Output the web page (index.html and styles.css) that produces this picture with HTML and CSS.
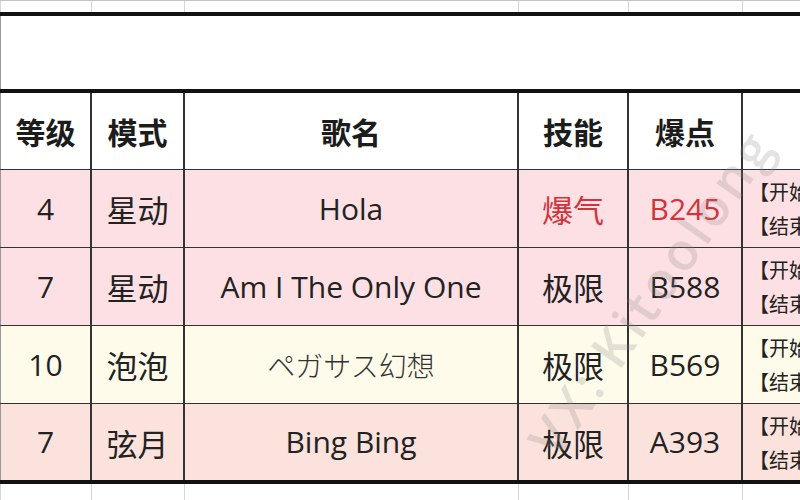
FILE: index.html
```html
<!DOCTYPE html>
<html lang="zh">
<head>
<meta charset="utf-8">
<link rel="stylesheet" href="styles.css">
</head>
<body>
<div class="sheet">
  <div class="row gridline">
    <div class="cell"></div><div class="cell"></div><div class="cell"></div><div class="cell"></div><div class="cell"></div><div class="cell"></div>
  </div>
  <div class="thick"></div>
  <div class="title"></div>
  <div class="thick"></div>
  <div class="row head">
    <div class="cell">等级</div>
    <div class="cell">模式</div>
    <div class="cell">歌名</div>
    <div class="cell">技能</div>
    <div class="cell">爆点</div>
    <div class="cell"></div>
  </div>
  <div class="row data pink">
    <div class="cell">4</div>
    <div class="cell cn">星动</div>
    <div class="cell">Hola</div>
    <div class="cell cn red">爆气</div>
    <div class="cell red">B245</div>
    <div class="cell note"><span>【开始】</span><span>【结束】</span></div>
  </div>
  <div class="row data pink">
    <div class="cell">7</div>
    <div class="cell cn">星动</div>
    <div class="cell">Am I The Only One</div>
    <div class="cell cn">极限</div>
    <div class="cell">B588</div>
    <div class="cell note"><span>【开始】</span><span>【结束】</span></div>
  </div>
  <div class="row data cream">
    <div class="cell">10</div>
    <div class="cell cn">泡泡</div>
    <div class="cell jp">ペガサス幻想</div>
    <div class="cell cn">极限</div>
    <div class="cell">B569</div>
    <div class="cell note"><span>【开始】</span><span>【结束】</span></div>
  </div>
  <div class="row data peach last">
    <div class="cell">7</div>
    <div class="cell cn">弦月</div>
    <div class="cell">Bing Bing</div>
    <div class="cell cn">极限</div>
    <div class="cell">A393</div>
    <div class="cell note"><span>【开始】</span><span>【结束】</span></div>
  </div>
  <div class="thick"></div>
  <div class="row gridline bottom">
    <div class="cell"></div><div class="cell"></div><div class="cell"></div><div class="cell"></div><div class="cell"></div><div class="cell"></div>
  </div>
</div>
<div class="watermark">VX: Kitoolong</div>
</body>
</html>
```
FILE: styles.css
```css
html, body {
  margin: 0;
  padding: 0;
  width: 800px;
  height: 500px;
  overflow: hidden;
  background: #ffffff;
}

body {
  position: relative;
  font-family: "Open Sans", "Noto Sans CJK SC", sans-serif;
  color: #222222;
}

.sheet {
  width: 950px;
  display: flex;
  flex-direction: column;
}

.row {
  display: grid;
  grid-template-columns: 92px 93px 334px 110px 114px 207px;
}

.cell {
  box-sizing: border-box;
  border-right: 2px solid #333333;
  display: flex;
  align-items: center;
  justify-content: center;
  font-size: 30px;
  line-height: 1;
  white-space: nowrap;
}

.row .cell:first-child {
  border-left: 1px solid #9a9a9a;
}

.gridline {
  height: 12px;
  box-sizing: border-box;
  border-top: 1px solid #c4c4c4;
}

.gridline .cell {
  border-right: 1px solid #d6d6d6;
}

.gridline .cell:first-child {
  border-left: 1px solid #d6d6d6;
}

.gridline.bottom {
  height: 20px;
  border-top: none;
}

.thick {
  height: 4px;
  background: #121212;
}

.title {
  height: 73px;
  box-sizing: border-box;
  border-left: 1px solid #9a9a9a;
  background: #ffffff;
}

.head {
  height: 77px;
  box-sizing: border-box;
  border-bottom: 1px solid #333333;
  background: #ffffff;
}

.head .cell {
  font-family: "Noto Sans CJK SC", sans-serif;
  font-weight: 700;
  font-size: 30px;
  color: #1c1c1c;
}

.data {
  height: 78px;
  box-sizing: border-box;
  border-bottom: 1px solid #333333;
}

.data.last {
  height: 76px;
  border-bottom: none;
}

.data .cell {
  font-family: "Open Sans", "Noto Sans CJK SC", sans-serif;
}

.data .cell.cn {
  font-family: "Noto Sans CJK SC", sans-serif;
  font-size: 31px;
}

.data .cell.jp {
  font-family: "Noto Sans CJK JP", sans-serif;
  font-size: 28px;
  font-weight: 300;
  color: #333333;
}

.pink { background: #fde0e3; }
.cream { background: #fefbeb; }
.peach { background: #fbe2dc; }

.data .cell.red { color: #d3313c; }

.data .cell.note {
  flex-direction: column;
  align-items: flex-start;
  justify-content: center;
  gap: 13px;
  padding-left: 6px;
}

.note span {
  font-family: "Noto Sans CJK SC", sans-serif;
  font-size: 20px;
  line-height: 21px;
  color: #222222;
}

.watermark {
  position: absolute;
  left: 400px;
  top: 256px;
  width: 500px;
  text-align: center;
  font-family: "Open Sans", sans-serif;
  font-weight: 600;
  font-size: 52px;
  letter-spacing: 4px;
  color: rgba(140, 140, 140, 0.24);
  transform: rotate(-55deg);
  transform-origin: center center;
  white-space: nowrap;
  pointer-events: none;
}
```
